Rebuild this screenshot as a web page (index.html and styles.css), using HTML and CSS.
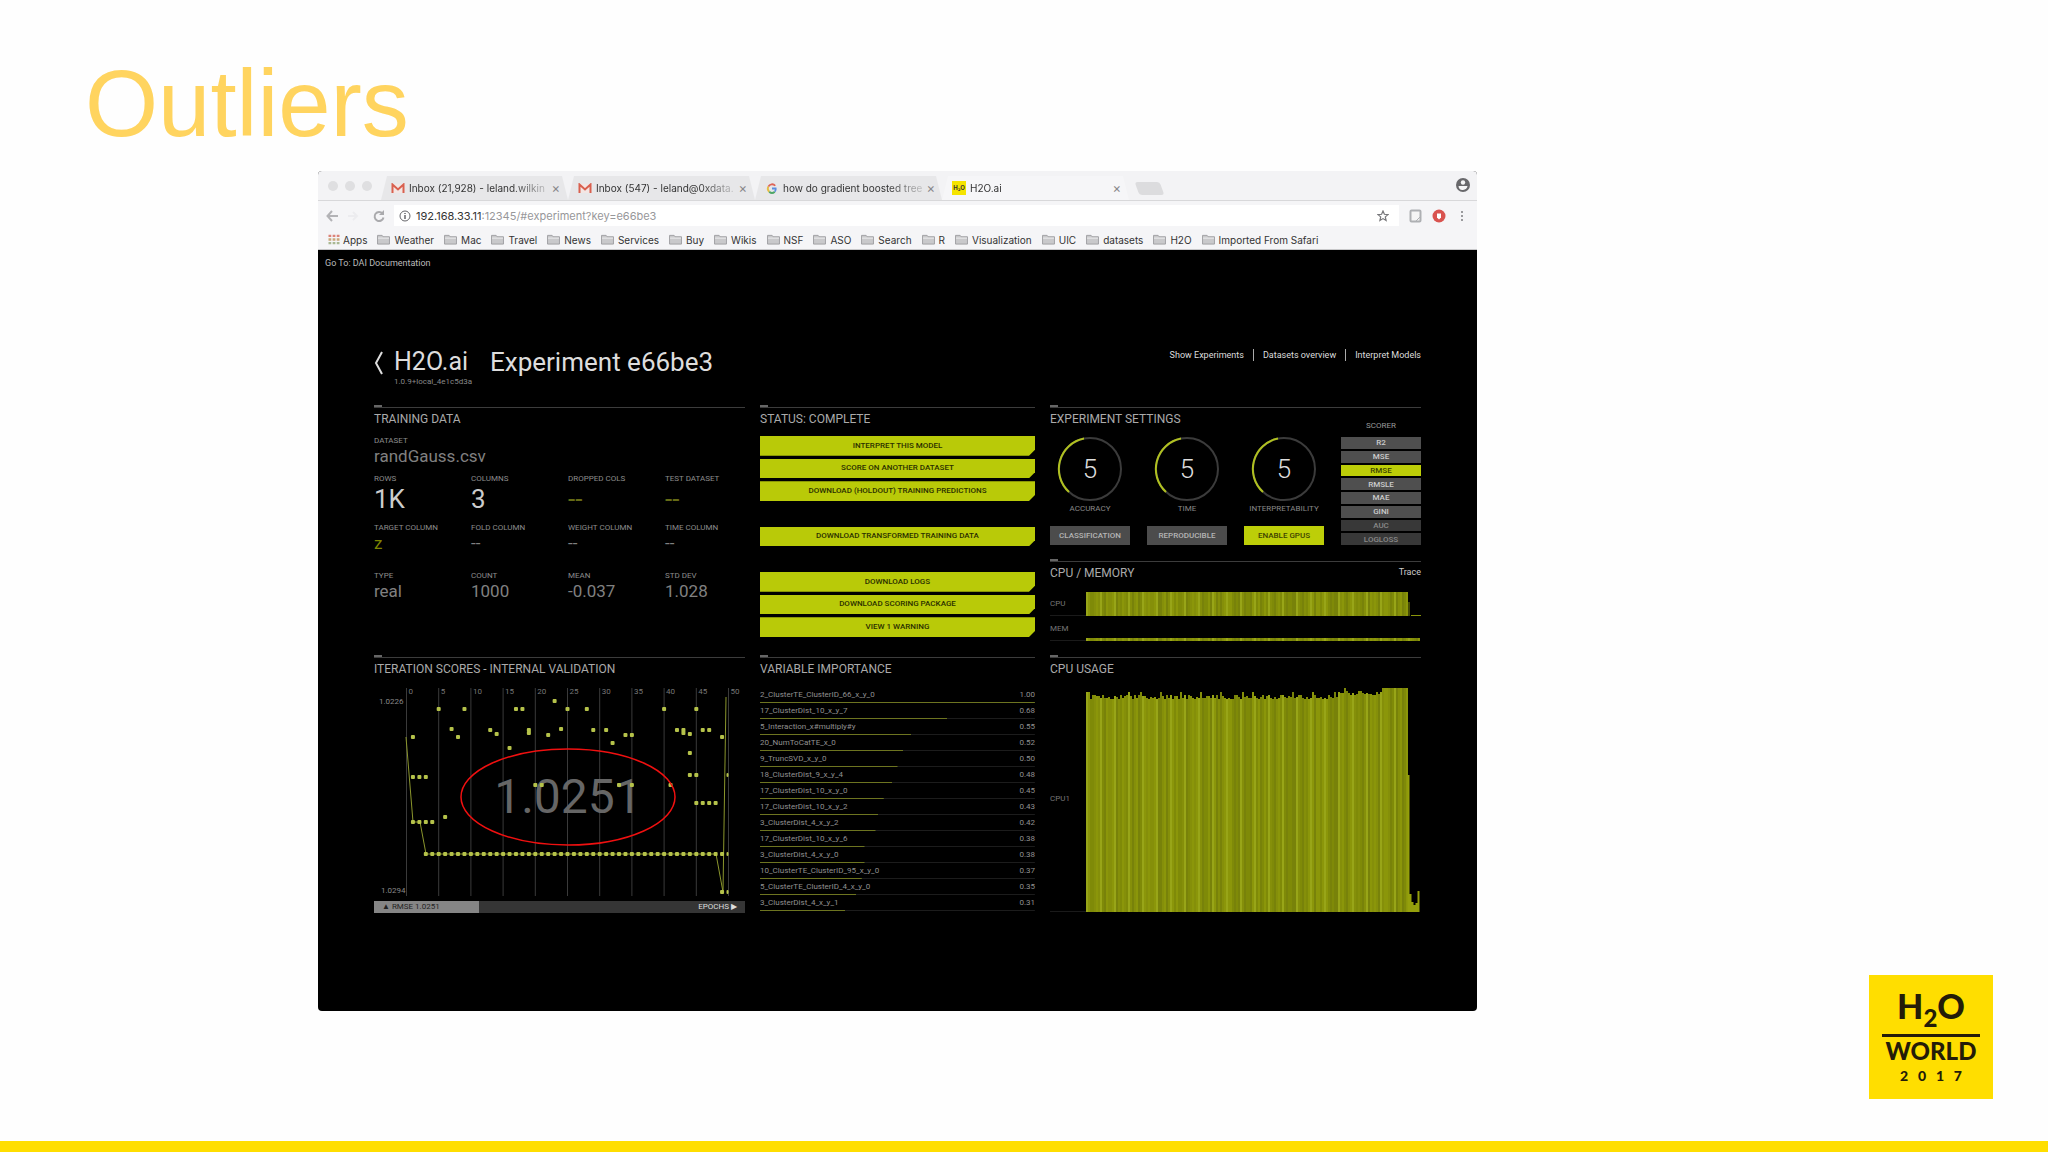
FILE: index.html
```
<!DOCTYPE html>
<html lang="en">
<head>
<meta charset="utf-8">
<title>Outliers</title>
<link rel="stylesheet" href="styles.css">
</head>
<body>
<svg class="sprites" aria-hidden="true">
  <symbol id="folder" viewBox="0 0 15 12"><path d="M1 1.500h5l1 1.500h7v8H1z" fill="#c9c9cb" stroke="#9d9da0"/><path d="M1.500 4.500h12" stroke="#f0f0f2"/></symbol>
  <symbol id="gmail" viewBox="0 0 14 11"><path d="M2 1h10v9H2z" fill="#f3e6e4"/><path d="M1.500 10V1.500L7 6.500l5.500-5V10" fill="none" stroke="#d9604f" stroke-width="2"/></symbol>
</svg>
<div class="slide">
  <h1>Outliers</h1>
  <main>
    <section class="window">
      <div class="tabs">
        <div class="lights"><i></i><i></i><i></i></div>
        <div class="tab"><svg class="fav"><use href="#gmail"/></svg><span>Inbox (21,928) - leland.wilkin</span><button aria-label="Close tab">×</button></div>
        <div class="tab"><svg class="fav"><use href="#gmail"/></svg><span>Inbox (547) - leland@0xdata.</span><button aria-label="Close tab">×</button></div>
        <div class="tab"><svg class="fav" viewBox="0 0 14 12"><path d="M10.500 3A4.500 4.500 0 0 0 3 4" fill="none" stroke="#dd6457" stroke-width="2"/><path d="M3 4a4.500 4.500 0 0 0 1 5.500" fill="none" stroke="#e5bd45" stroke-width="2"/><path d="M4 9.500A4.500 4.500 0 0 0 10 9.500" fill="none" stroke="#4fa767" stroke-width="2"/><path d="M10 9.500q1.500-1.500 1-3.500H7" fill="none" stroke="#5a8de0" stroke-width="2"/></svg><span>how do gradient boosted tree</span><button aria-label="Close tab">×</button></div>
        <div class="tab active"><b class="h2o">H₂O</b><span>H2O.ai</span><button aria-label="Close tab">×</button></div>
        <i class="newtab"></i>
        <svg class="person" viewBox="0 0 14 14"><circle cx="7" cy="7" r="7" fill="#68686b"/><circle cx="7" cy="4.500" r="2.200" fill="#f5f5f6"/><path d="M2.500 8h9q-.5 3.500-4.500 4t-4.500-4" fill="#f5f5f6"/></svg>
      </div>
      <div class="toolbar">
        <svg class="navs" viewBox="0 0 64 14"><path d="M12 7H2M6 2L1.500 7 6 12" fill="none" stroke="#b3b3b6" stroke-width="2"/><path d="M22 7h8M27 3l4 4-4 4" fill="none" stroke="#ececef" stroke-width="2"/><path d="M56.500 4.500A4.500 4.500 0 1 0 57.500 8.500" fill="none" stroke="#aaaaad" stroke-width="2"/><path d="M58 1v5h-5z" fill="#aaaaad"/></svg>
        <div class="url">
          <svg viewBox="0 0 12 12"><circle cx="6" cy="6" r="5" fill="none" stroke="#66666a"/><path d="M6 5v4M6 3v1" stroke="#66666a" stroke-width="1.500"/></svg>
          <label for="address">192.168.33.11</label><input id="address" value=":12345/#experiment?key=e66be3">
          <svg viewBox="0 0 12 12"><path d="M6 1l1.400 3.300 3.600.3-2.700 2.300.8 3.600L6 8.600 2.900 10.500l.8-3.600L1 4.600l3.600-.3z" fill="none" stroke="#77777a" stroke-width="1.200"/></svg>
        </div>
        <svg class="ext" viewBox="0 0 56 14"><rect x="1.500" y="1.500" width="10" height="11" rx="1" fill="#f5f5f5" stroke="#aeb0b3" stroke-width="2"/><path d="M7 12l4-4" stroke="#aeb0b3"/><circle cx="30" cy="7" r="6.500" fill="#d9534f"/><path d="M28 4.500h4v4l-2 2-2-2z" fill="#fff"/><path d="M53 2v2M53 6v2M53 10v2" stroke="#9a9a9d" stroke-width="2"/></svg>
      </div>
      <nav class="bookmarks">
        <a href="#"><svg viewBox="0 0 12 12"><path d="M0 2h12" stroke="#dc8479" stroke-width="2.500" stroke-dasharray="3 1.500"/><path d="M0 6h12" stroke="#c9a77a" stroke-width="2.500" stroke-dasharray="3 1.500"/><path d="M0 10h12" stroke="#a9b993" stroke-width="2.500" stroke-dasharray="3 1.500"/></svg>Apps</a>
        <a href="#"><svg><use href="#folder"/></svg>Weather</a>
        <a href="#"><svg><use href="#folder"/></svg>Mac</a>
        <a href="#"><svg><use href="#folder"/></svg>Travel</a>
        <a href="#"><svg><use href="#folder"/></svg>News</a>
        <a href="#"><svg><use href="#folder"/></svg>Services</a>
        <a href="#"><svg><use href="#folder"/></svg>Buy</a>
        <a href="#"><svg><use href="#folder"/></svg>Wikis</a>
        <a href="#"><svg><use href="#folder"/></svg>NSF</a>
        <a href="#"><svg><use href="#folder"/></svg>ASO</a>
        <a href="#"><svg><use href="#folder"/></svg>Search</a>
        <a href="#"><svg><use href="#folder"/></svg>R</a>
        <a href="#"><svg><use href="#folder"/></svg>Visualization</a>
        <a href="#"><svg><use href="#folder"/></svg>UIC</a>
        <a href="#"><svg><use href="#folder"/></svg>datasets</a>
        <a href="#"><svg><use href="#folder"/></svg>H2O</a>
        <a href="#"><svg><use href="#folder"/></svg>Imported From Safari</a>
      </nav>
      <div class="app">
        <a class="docs" href="#">Go To: DAI Documentation</a>
        <header>
          <svg class="back" viewBox="0 0 9 24"><path d="M8 1L2 12l6 11" fill="none" stroke="#ddd" stroke-width="2"/></svg>
          <div class="brand"><b>H2O.ai</b><small>1.0.9+local_4e1c5d3a</small></div>
          <h2>Experiment e66be3</h2>
          <nav><a href="#">Show Experiments</a><a href="#">Datasets overview</a><a href="#">Interpret Models</a></nav>
        </header>
        <div class="panels">
          <section class="panel">
            <h3>TRAINING DATA</h3>
            <dl class="facts">
              <div class="wide"><dt>DATASET</dt><dd>randGauss.csv</dd></div>
              <div class="big"><dt>ROWS</dt><dd>1K</dd></div>
              <div class="big"><dt>COLUMNS</dt><dd>3</dd></div>
              <div class="big none"><dt>DROPPED COLS</dt><dd>--</dd></div>
              <div class="big none"><dt>TEST DATASET</dt><dd>--</dd></div>
              <div class="target"><dt>TARGET COLUMN</dt><dd>z</dd></div>
              <div><dt>FOLD COLUMN</dt><dd>--</dd></div>
              <div><dt>WEIGHT COLUMN</dt><dd>--</dd></div>
              <div><dt>TIME COLUMN</dt><dd>--</dd></div>
              <div><dt>TYPE</dt><dd>real</dd></div>
              <div><dt>COUNT</dt><dd>1000</dd></div>
              <div><dt>MEAN</dt><dd>-0.037</dd></div>
              <div><dt>STD DEV</dt><dd>1.028</dd></div>
            </dl>
          </section>
          <section class="panel">
            <h3>STATUS: COMPLETE</h3>
            <div class="actions">
              <button>INTERPRET THIS MODEL</button>
              <button>SCORE ON ANOTHER DATASET</button>
              <button>DOWNLOAD (HOLDOUT) TRAINING PREDICTIONS</button>
              <i></i>
              <button>DOWNLOAD TRANSFORMED TRAINING DATA</button>
              <i></i>
              <button>DOWNLOAD LOGS</button>
              <button>DOWNLOAD SCORING PACKAGE</button>
              <button>VIEW 1 WARNING</button>
            </div>
          </section>
          <div>
            <section class="panel settings">
              <h3>EXPERIMENT SETTINGS</h3>
              <div class="dial"><div><svg viewBox="0 0 66 66"><circle cx="33" cy="33" r="31"/><path d="M12 56A31 31 0 0 1 27 2.600"/></svg><b>5</b></div>ACCURACY</div>
              <div class="dial"><div><svg viewBox="0 0 66 66"><circle cx="33" cy="33" r="31"/><path d="M12 56A31 31 0 0 1 27 2.600"/></svg><b>5</b></div>TIME</div>
              <div class="dial"><div><svg viewBox="0 0 66 66"><circle cx="33" cy="33" r="31"/><path d="M12 56A31 31 0 0 1 27 2.600"/></svg><b>5</b></div>INTERPRETABILITY</div>
              <button class="toggle">CLASSIFICATION</button>
              <button class="toggle">REPRODUCIBLE</button>
              <button class="toggle on">ENABLE GPUS</button>
              <div class="scorer">SCORER
                <div><button>R2</button><button>MSE</button><button class="on">RMSE</button><button>RMSLE</button><button>MAE</button><button>GINI</button><button class="off">AUC</button><button class="off">LOGLOSS</button></div>
              </div>
            </section>
            <section class="panel memory">
              <h3>CPU / MEMORY <a href="#">Trace</a></h3>
              <div class="meter"><span>CPU</span><svg id="cpu" viewBox="0 0 335 24" preserveAspectRatio="none"></svg></div>
              <div class="meter"><span>MEM</span><svg id="mem" viewBox="0 0 335 24" preserveAspectRatio="none"></svg></div>
            </section>
          </div>
          <section class="panel">
            <h3>ITERATION SCORES - INTERNAL VALIDATION</h3>
            <svg id="scores" viewBox="0 0 371 212"></svg>
            <div class="legend"><span>▲ RMSE 1.0251</span><span>EPOCHS ▶</span></div>
          </section>
          <section class="panel">
            <h3>VARIABLE IMPORTANCE</h3>
            <table>
              <tr style="--v:100%"><td>2_ClusterTE_ClusterID_66_x_y_0</td><td>1.00</td></tr>
              <tr style="--v:68%"><td>17_ClusterDist_10_x_y_7</td><td>0.68</td></tr>
              <tr style="--v:55%"><td>5_Interaction_x#multiply#y</td><td>0.55</td></tr>
              <tr style="--v:52%"><td>20_NumToCatTE_x_0</td><td>0.52</td></tr>
              <tr style="--v:50%"><td>9_TruncSVD_x_y_0</td><td>0.50</td></tr>
              <tr style="--v:48%"><td>18_ClusterDist_9_x_y_4</td><td>0.48</td></tr>
              <tr style="--v:45%"><td>17_ClusterDist_10_x_y_0</td><td>0.45</td></tr>
              <tr style="--v:43%"><td>17_ClusterDist_10_x_y_2</td><td>0.43</td></tr>
              <tr style="--v:42%"><td>3_ClusterDist_4_x_y_2</td><td>0.42</td></tr>
              <tr style="--v:38%"><td>17_ClusterDist_10_x_y_6</td><td>0.38</td></tr>
              <tr style="--v:38%"><td>3_ClusterDist_4_x_y_0</td><td>0.38</td></tr>
              <tr style="--v:37%"><td>10_ClusterTE_ClusterID_95_x_y_0</td><td>0.37</td></tr>
              <tr style="--v:35%"><td>5_ClusterTE_ClusterID_4_x_y_0</td><td>0.35</td></tr>
              <tr style="--v:31%"><td>3_ClusterDist_4_x_y_1</td><td>0.31</td></tr>
            </table>
          </section>
          <section class="panel usage">
            <h3>CPU USAGE</h3>
            <div class="meter"><span>CPU1</span><svg id="usage" viewBox="0 0 335 225" preserveAspectRatio="none"></svg></div>
          </section>
        </div>
      </div>
    </section>
    <aside class="logo">
      <div class="formula">H<sub>2</sub>O</div>
      <div class="world">WORLD</div>
      <div class="year"><span>2</span><span>0</span><span>1</span><span>7</span></div>
    </aside>
  </main>
  <footer></footer>
</div>
<script src="charts.js"></script>
</body>
</html>
```
FILE: styles.css
```
* { box-sizing: border-box; }
body { margin: 0; background: #fefefe; font-family: "Liberation Sans", sans-serif; }
button { border: 0; padding: 0; font: inherit; color: inherit; background: none; }
a { color: inherit; text-decoration: none; }
svg { display: block; }
.sprites { position: absolute; width: 0; height: 0; }

.slide { min-height: 100vh; display: flex; flex-direction: column; padding-top: 52px; }
h1 { margin: 0 0 15px 85px; font-size: 94px; line-height: 104px; font-weight: 400; color: #ffd45f; }
main { flex: 1; display: grid; grid-template-columns: 318fr 1159fr 392fr 124px 55px; padding-bottom: 42px; }
footer { height: 11px; background: #ffde00; }

.window { grid-column: 2; align-self: start; background: #000; border-radius: 4px; overflow: hidden; }
.tabs { display: flex; align-items: flex-end; height: 30px; padding-right: 7px; background: #f3f3f5; border-bottom: 1px solid #d8d8da; font: 10px/20px Inter, sans-serif; color: #333; }
.lights { display: flex; gap: 7px; padding: 0 9px 9px 10px; }
.lights i { width: 10px; height: 10px; border-radius: 50%; background: #dfdfe1; }
.tab { flex: 0 1 187px; min-width: 0; display: flex; align-items: center; gap: 4px; height: 24px; padding: 0 8px 0 10px; background: #e7e7e9; clip-path: polygon(6px 0, calc(100% - 6px) 0, 100% 100%, 0 100%); }
.tab span { flex: 1; white-space: nowrap; mask-image: linear-gradient(90deg, #000 75%, #0003); }
.tab.active { background: #f6f6f8; }
.tab button { color: #88888b; font-size: 13px; }
.fav { width: 14px; height: 11px; flex: none; }
.h2o { width: 14px; height: 14px; background: #f5e400; font-size: 6px; line-height: 14px; text-align: center; }
.newtab { width: 25px; height: 13px; margin: 0 auto 5px 8px; background: #dcdcde; border-radius: 3px; transform: skewX(20deg); }
.person { width: 14px; height: 14px; margin-bottom: 8px; }
.toolbar { display: flex; align-items: center; height: 29px; padding: 0 12px 0 8px; background: #f5f5f7; }
.navs { width: 64px; height: 14px; margin-right: 4px; }
.url { flex: 1; display: flex; align-items: center; height: 21px; padding: 0 5px; background: #fff; font: 11px/20px Inter, sans-serif; color: #333; }
.url svg { width: 12px; height: 12px; margin-right: 5px; }
.url input { flex: 1; min-width: 0; border: 0; padding: 0; outline: 0; background: none; font: inherit; color: #97979a; }
.ext { width: 56px; height: 14px; margin-left: 10px; }
.bookmarks { display: flex; gap: 9px; height: 20px; padding-left: 10px; background: #f5f5f7; border-bottom: 1px solid #c8c8ca; font: 10px/18px Inter, sans-serif; color: #333; white-space: nowrap; }
.bookmarks a { display: flex; align-items: center; gap: 3px; }
.bookmarks svg { width: 15px; height: 11px; }
.bookmarks a:first-child svg { width: 12px; }

.app { padding: 7px 56px 98px; color: #bbb; font: 8px/12px "Roboto", sans-serif; }
.docs { display: block; width: max-content; margin-left: -49px; font-size: 9px; }
.app header { display: flex; align-items: flex-start; height: 138px; padding-top: 79px; color: #ddd; }
.back { width: 9px; height: 24px; margin: 3px 11px 0 0; }
.brand { width: 80px; white-space: nowrap; }
.brand b { display: block; font-size: 25px; line-height: 28px; font-weight: 400; }
.brand small { display: block; font-size: 8px; line-height: 12px; color: #888; }
.app h2 { margin: 0 0 0 16px; font-size: 26px; line-height: 28px; font-weight: 400; }
.app header nav { display: flex; margin: 1px 0 0 auto; font-size: 9px; }
.app header nav a + a { margin-left: 9px; padding-left: 9px; border-left: 1px solid #aaa; }

.panels { display: grid; grid-template-columns: 371fr 275fr 371fr; grid-template-rows: 250px auto; column-gap: 15px; }
.panel { position: relative; min-width: 0; padding-top: 3px; border-top: 1px solid #3c3c3c; }
.panel::before { content: ""; position: absolute; left: 0; top: -3px; width: 8px; height: 2px; background: #666; }
h3 { display: flex; justify-content: space-between; margin: 0; font-size: 12px; line-height: 16px; font-weight: 400; color: #aaa; }
h3 a { font-size: 9px; line-height: 14px; color: #ccc; }

.facts { display: grid; grid-template-columns: repeat(4, 97px); grid-template-rows: 38px 49px 48px 30px; margin: 8px 0 0; }
.wide { grid-column: 1 / -1; }
dt { color: #8c8c8c; }
dd { margin: 0; font-size: 17px; line-height: 18px; color: #808080; }
.big dd { font-size: 26px; line-height: 28px; color: #ccc; }
.big.none dd { color: #666b16; }
.target dd { color: #7d8500; }

.actions { display: grid; grid-auto-rows: 1fr; gap: 3px; height: 201px; margin-top: 9px; }
.actions button { background: #b9ca08; color: #2b3000; font-weight: 500; clip-path: polygon(0 0, 100% 0, 100% calc(100% - 6px), calc(100% - 6px) 100%, 0 100%); }

.settings { display: grid; grid-template-columns: repeat(4, 1fr); column-gap: 17px; grid-template-rows: 16px 99px 19px; margin-bottom: 16px; }
.settings h3 { grid-column: 1 / 4; }
.dial { padding-top: 9px; text-align: center; line-height: 14px; color: #888; white-space: nowrap; }
.dial div { display: grid; justify-content: center; align-items: center; }
.dial svg, .dial b { grid-area: 1 / 1; }
.dial svg { width: 66px; height: 66px; fill: none; stroke: #3b3b3b; stroke-width: 2; }
.dial path { stroke: #b0c020; }
.dial b { font-size: 26px; line-height: 28px; font-weight: 300; color: #ddd; }
.toggle { background: #4c4c4c; color: #b5b5b5; font-weight: 500; }
.toggle.on, .scorer .on { background: #bdce08; color: #3d4300; }
.scorer { grid-column: 4; grid-row: 1 / 4; padding-top: 9px; text-align: center; color: #999; }
.scorer div { display: grid; grid-auto-rows: 1fr; gap: 2px; height: 108px; margin-top: 5px; }
.scorer button { background: #4f4f4f; color: #ccc; line-height: 11px; font-weight: 500; }
.scorer .off { background: #383838; color: #888; }
.meter { display: grid; grid-template-columns: 36px 1fr; align-items: center; color: #777; }
.meter svg { width: 100%; height: 24px; }
.memory h3 { margin-bottom: 11px; }
.memory .meter + .meter { margin-top: 1px; }
.meter span { border-bottom: 1px solid #1a1a1a; height: 100%; display: flex; align-items: center; }
.usage h3 { margin-bottom: 10px; }
.usage svg { height: 225px; }

#scores { width: 100%; margin: 7px 0 5px; font-size: 8px; }
.legend { display: flex; justify-content: space-between; line-height: 12px; padding-right: 8px; background: linear-gradient(90deg, #858585 105px, #353535 0); color: #ddd; }
.legend span:first-child { padding-left: 8px; color: #222; }

table { width: 100%; margin-top: 10px; border-collapse: collapse; color: #909090; }
tr { height: 16px; background: linear-gradient(#6d7420, #6d7420) 0 100% / var(--v) 1px no-repeat, linear-gradient(#1c1c1c, #1c1c1c) 0 100% / 100% 1px no-repeat; }
td { padding: 0; line-height: 12px; }
td:last-child { text-align: right; }

.logo { grid-column: 4; align-self: end; height: 124px; padding: 16px 13px 0; background: #ffde00; color: #241c08; font-family: Lato, sans-serif; text-align: center; }
.formula { height: 46px; border-bottom: 3px solid #241c08; font-size: 34px; line-height: 30px; font-weight: 900; }
.formula sub { font-size: 24px; line-height: 0; }
.world { font-size: 24px; line-height: 28px; font-weight: 900; }
.year { display: flex; justify-content: space-between; padding: 0 18px; font-size: 14px; line-height: 22px; font-weight: 900; }
```
FILE: charts.js
```
const NS = 'http://www.w3.org/2000/svg';
function add(parent, name, attrs, text) {
  const el = document.createElementNS(NS, name);
  for (const k in attrs) el.setAttribute(k, attrs[k]);
  if (text) el.textContent = text;
  parent.append(el);
}

// Iteration scores: one dot per model, [epoch, y]
const scores = document.getElementById('scores');
const px = e => 32.5 + e * 6.44;
for (let e = 0; e <= 50; e += 5) {
  add(scores, 'path', { d: `M${px(e)} 4V212`, stroke: '#3a3a3a' });
  add(scores, 'text', { x: px(e) + 2, y: 10, fill: '#777' }, String(e));
}
add(scores, 'text', { x: 5, y: 20, fill: '#888' }, '1.0226');
add(scores, 'text', { x: 7, y: 209, fill: '#888' }, '1.0294');
add(scores, 'text', { x: 194, y: 129, fill: '#666', 'font-size': 48, 'text-anchor': 'middle' }, '1.0251');
add(scores, 'path', { d: 'M32 53L39 138H46L52 170H342L349 208L352 13', fill: 'none', stroke: '#8b962c' });
const dots = [[1,53],[5,25],[7,45],[8,53],[9,25],[13,46],[14,50],[16,64],[17,25],[18,25],[19,46],[19,49],[20,101],[21,101],[22,51],[23,17],[24,45],[25,25],[28,25],[29,46],[31,46],[32,59],[33,101],[34,51],[35,51],[35,101],[40,25],[41,101],[42,46],[43,46],[43,49],[44,50],[44,69],[44,91],[45,25],[45,91],[46,46],[47,46],[49,53],[50,91],[45,119],[46,119],[47,119],[48,119],[1,93],[2,93],[3,93],[1,138],[2,138],[3,138],[4,138],[6,133],[49,208],[50,208]];
for (let e = 3; e <= 50; e++) dots.push([e, 170]);
for (const [e, y] of dots) add(scores, 'rect', { x: px(e) - 2, y: y - 2, width: e === 50 ? 2 : 4, height: 4, rx: 1, fill: '#b5c24a' });
add(scores, 'ellipse', { cx: 194, cy: 113, rx: 107, ry: 48, fill: 'none', stroke: '#f01010', 'stroke-width': 1.5 });

// Processor history: narrow bars, optionally with an uneven top
const shades = ['#7f8a08', '#8b960a', '#78820a', '#858f0a', '#98a518'];
function history(id, top, ripple, height, end) {
  const svg = document.getElementById(id);
  for (let i = 0; i * 2 < end; i++) {
    const n = (i * 37 + (i * i) % 23) % 29;
    const base = i * 2 > 250 ? 7 : 11;
    const drop = !ripple || i * 2 > 294 ? 0 : base - (n % 9 === 0 ? 7 : n % 5);
    const y = top + drop;
    add(svg, 'rect', { x: i * 2, y, width: 2, height: height - y, fill: shades[i % 7 === 0 ? 4 : n % 4] });
  }
}
history('cpu', 0, false, 24, 322);
add(document.getElementById('cpu'), 'path', { d: 'M323 10V24M325 23.500H335', stroke: '#8a950a' });
history('mem', 21, false, 24, 333);
history('usage', 1, true, 225, 321);
add(document.getElementById('usage'), 'path', { d: 'M322.500 88V225M324.500 207V225M326.500 215V225M328.500 218V225M330.500 216V225M332.500 204V225', stroke: '#95a00c', 'stroke-width': 2 });
```
